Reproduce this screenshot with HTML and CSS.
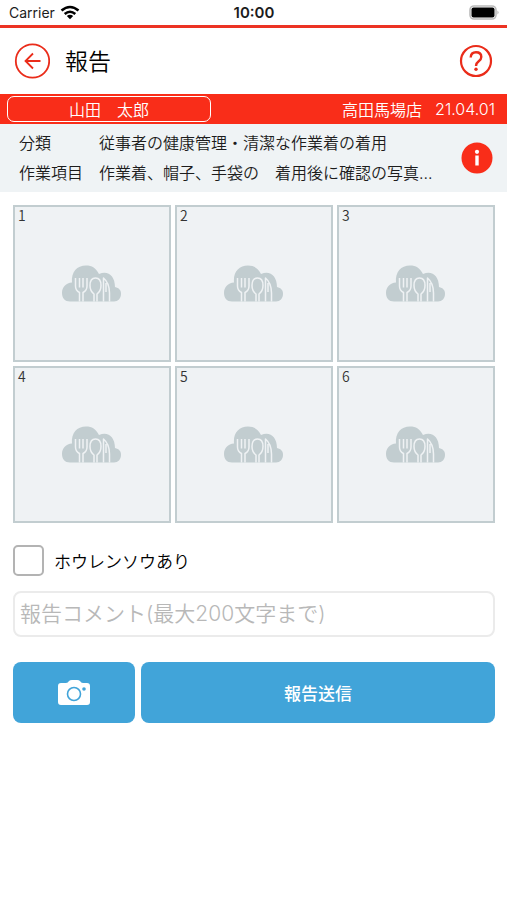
FILE: index.html
```html
<!DOCTYPE html>
<html lang="ja">
<head>
<meta charset="utf-8">
<meta name="viewport" content="width=device-width, initial-scale=1">
<title>報告</title>
<link rel="stylesheet" href="styles.css">
</head>
<body>
<svg class="defs" aria-hidden="true">
  <symbol id="cloud" viewBox="0 0 60 38">
    <path fill="#c2cdd0" d="M8 36.500C3 36.500 0 33 0 28C0 22 4 18 10 17.500C9 7 15 0.500 24 0.500C30 0.500 34 3 37 9C46 5 53 11 53 22C57 23 59 25 59 29C59 33.500 56 36.500 52 36.500Z"/>
    <g fill="none" stroke="#eff2f4" stroke-width="1.500" stroke-linejoin="round">
      <path d="M17.500 36.500V27.500Q13.500 25.500 13.500 21V13M17.500 13V22.500M21 13V22.500M25 13V21Q25 25.500 21 27.500V36.500"/>
      <path d="M32 36.500V29Q28 26 28 20.500Q28 13 33.500 13Q39 13 39 20.500Q39 26 35 29V36.500"/>
      <path d="M41.500 36.500V13Q47.500 18 47.500 28V36.500M44 18V27"/>
    </g>
  </symbol>
</svg>
<div class="status">
  <div class="carrier"><span>Carrier</span>
    <svg width="20" height="15" viewBox="0 0 20 15" aria-hidden="true"><g fill="none" stroke="#000" stroke-width="2.600"><path d="M1.500 5.500Q10 -1.500 18.500 5.500"/><path d="M4.700 9Q10 4.500 15.300 9"/></g><path d="M6.800 11Q10 8.500 13.200 11L10 14.200Z"/></svg>
  </div>
  <span class="time">10:00</span>
  <svg class="battery" width="30" height="15" viewBox="0 0 30 15" aria-hidden="true"><rect x="1" y="1" width="26" height="13" rx="4" fill="#fff" stroke="#bbb" stroke-width="1.600"/><rect x="2.500" y="2.500" width="23" height="10" rx="2"/><path fill="#aaa" d="M28.500 5.500Q30.500 7.500 28.500 9.500Z"/></svg>
</div>
<header class="header">
  <button class="icon-button" type="button" aria-label="戻る">
    <svg width="36" height="36" viewBox="0 0 36 36"><g fill="none" stroke="#ea2c1a" stroke-width="1.800"><circle cx="18.500" cy="18" r="16.700"/><path d="M26.500 18H12M19 10.500L11.500 18L19 25.500"/></g></svg>
  </button>
  <h1 class="title">報告</h1>
  <button class="icon-button" type="button" aria-label="ヘルプ">
    <svg width="34" height="34" viewBox="0 0 34 34"><g fill="none" stroke="#ea2c1a"><circle cx="17" cy="17" r="15" stroke-width="2.200"/><path stroke-width="2.400" d="M11.700 13.500Q12 8.300 17 8.300Q22.300 8.300 22.300 13Q22.300 15.300 19.700 17.300Q17 19.300 17 22"/></g><circle cx="17" cy="25.300" r="1.700" fill="#ea2c1a"/></svg>
  </button>
</header>
<div class="band">
  <button class="person" type="button">山田　太郎</button>
  <span class="shop">高田馬場店</span>
  <time class="date" datetime="2021-04-01">21.04.01</time>
</div>
<section class="info">
  <dl class="facts">
    <dt>分類</dt><dd>従事者の健康管理・清潔な作業着の着用</dd>
    <dt>作業項目</dt><dd>作業着、帽子、手袋の　着用後に確認の写真...</dd>
  </dl>
  <button class="icon-button" type="button" aria-label="詳細">
    <svg width="32" height="32" viewBox="0 0 32 32"><circle cx="16" cy="16" r="15.500" fill="#f92d19"/><circle cx="16" cy="9.800" r="2.100" fill="#fff"/><path fill="#fff" d="M14.300 13.500H17.700V23.500H14.300Z"/></svg>
  </button>
</section>
<main class="content">
  <div class="photos">
    <div class="photo"><span class="number">1</span><svg class="cloud" aria-hidden="true"><use href="#cloud"/></svg></div>
    <div class="photo"><span class="number">2</span><svg class="cloud" aria-hidden="true"><use href="#cloud"/></svg></div>
    <div class="photo"><span class="number">3</span><svg class="cloud" aria-hidden="true"><use href="#cloud"/></svg></div>
    <div class="photo"><span class="number">4</span><svg class="cloud" aria-hidden="true"><use href="#cloud"/></svg></div>
    <div class="photo"><span class="number">5</span><svg class="cloud" aria-hidden="true"><use href="#cloud"/></svg></div>
    <div class="photo"><span class="number">6</span><svg class="cloud" aria-hidden="true"><use href="#cloud"/></svg></div>
  </div>
  <label class="check"><input class="box" type="checkbox">ホウレンソウあり</label>
  <input class="comment" type="text" aria-label="報告コメント" placeholder="報告コメント(最大200文字まで)">
  <div class="actions">
    <button class="action" type="button" aria-label="写真を撮る">
      <svg width="34" height="27" viewBox="0 0 34 27"><path fill="#fff" d="M4 4H9Q11 4 12 2Q13 1 15 1H20Q22 1 23 2Q24 4 26 4H30Q33 4 33 7V23Q33 26 30 26H4Q1 26 1 23V7Q1 4 4 4Z"/><circle cx="17" cy="15" r="6.500" fill="none" stroke="#41a4d9" stroke-width="1.600"/><circle cx="27" cy="10" r="1.800" fill="#41a4d9"/></svg>
    </button>
    <button class="action" type="submit">報告送信</button>
  </div>
</main>
</body>
</html>
```
FILE: styles.css
```css
* {
  box-sizing: border-box;
}

body {
  margin: 0;
  background: #fff;
  color: #1c1c1c;
  font-family: "Noto Sans CJK JP", sans-serif;
  font-size: 16px;
  font-weight: 350;
}

button {
  font: inherit;
  cursor: pointer;
}

svg {
  display: block;
}

.defs {
  position: absolute;
  width: 0;
  height: 0;
}

.status {
  display: grid;
  grid-template-columns: 1fr auto 1fr;
  align-items: center;
  height: 28px;
  padding: 0 8px 0 9px;
  border-bottom: 3px solid #ec3323;
  font-family: Inter, sans-serif;
  font-size: 14px;
  font-weight: 400;
}

.carrier {
  display: flex;
  align-items: center;
  gap: 5px;
}

.time {
  font-size: 15px;
  font-weight: 600;
}

.battery {
  justify-self: end;
}

.header {
  display: flex;
  align-items: center;
  height: 66px;
  padding: 0 14px;
}

.icon-button {
  flex: none;
  padding: 0;
  border: 0;
  background: none;
}

.title {
  flex: 1;
  margin: 0 0 2px 15px;
  color: #000;
  font-size: 23px;
  font-weight: 350;
  line-height: 32px;
}

.band {
  display: flex;
  align-items: center;
  height: 30px;
  padding: 0 12px 0 7px;
  background: #f92d19;
  color: #fff;
  line-height: 24px;
}

.person {
  width: 204px;
  height: 26px;
  padding: 0 0 1px;
  border: 1px solid #fff;
  border-radius: 7px;
  background: none;
  color: inherit;
  line-height: 22px;
}

.shop {
  margin-left: auto;
}

.date {
  margin-left: 13px;
  font-family: Inter, sans-serif;
}

.info {
  display: flex;
  align-items: center;
  justify-content: space-between;
  height: 68px;
  padding: 0 14px 0 19px;
  background: #eff3f5;
}

.facts {
  display: grid;
  grid-template-columns: 80px 1fr;
  margin: 0;
  font-family: Inter, "Noto Sans CJK JP", sans-serif;
  line-height: 30px;
}

.facts dd {
  margin: 0;
}

.content {
  padding: 13px 12px 0 13px;
}

.photos {
  display: grid;
  grid-template-columns: repeat(3, 1fr);
  gap: 4px;
}

.photo {
  display: grid;
  place-items: center;
  aspect-ratio: 158 / 157;
  border: 2px solid #c2cdd0;
  background: #eff2f4;
}

.number,
.cloud {
  grid-area: 1 / 1;
}

.number {
  place-self: start;
  padding-left: 3px;
  color: #333;
  font-size: 14px;
  line-height: 16px;
}

.cloud {
  width: 60px;
  height: 38px;
}

.check {
  display: flex;
  align-items: center;
  gap: 10px;
  margin-top: 22px;
  color: #000;
  font-size: 17px;
  line-height: 31px;
}

.box {
  width: 31px;
  height: 31px;
  margin: 0;
  appearance: none;
  border: 2px solid #b3b3b3;
  border-radius: 5px;
}

.box:checked {
  background: #41a4d9;
}

.comment {
  display: block;
  width: 100%;
  height: 46px;
  margin-top: 15px;
  padding: 0 5px 2px;
  border: 2px solid #ebebeb;
  border-radius: 8px;
  font: inherit;
  font-family: Inter, "Noto Sans CJK JP", sans-serif;
  font-size: 21px;
}

.comment::placeholder {
  color: #b8b8b8;
}

.actions {
  display: grid;
  grid-template-columns: 122fr 354fr;
  gap: 6px;
  margin-top: 25px;
}

.action {
  display: grid;
  place-items: center;
  height: 61px;
  padding: 0;
  border: 0;
  border-radius: 8px;
  background: #41a4d9;
  color: #fff;
  font-size: 17px;
  font-weight: 500;
}
```
